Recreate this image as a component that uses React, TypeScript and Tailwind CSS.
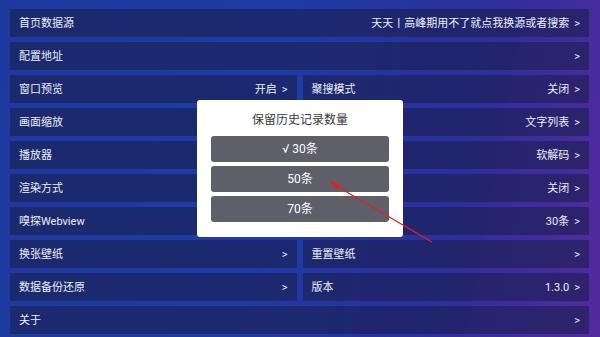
import React from 'react';

interface Cell {
  label: string;
  value?: string;
  noArrow?: boolean;
}

type Row = Cell[];

// cells under the dialog keep only what shows around it
const rows: Row[] = [
  [{ label: '首页数据源', value: '天天丨高峰期用不了就点我换源或者搜索' }],
  [{ label: '配置地址', value: '' }],
  [{ label: '窗口预览', value: '开启' }, { label: '聚搜模式', value: '关闭' }],
  [{ label: '画面缩放', noArrow: true }, { label: '', value: '文字列表' }],
  [{ label: '播放器', noArrow: true }, { label: '', value: '软解码' }],
  [{ label: '渲染方式', noArrow: true }, { label: '', value: '关闭' }],
  [{ label: '嗅探Webview', noArrow: true }, { label: '', value: '30条' }],
  [{ label: '换张壁纸', value: '' }, { label: '重置壁纸', value: '' }],
  [{ label: '数据备份还原', value: '' }, { label: '版本', value: '1.3.0' }],
  [{ label: '关于', value: '' }],
];

const options = ['√ 30条', '50条', '70条'];

function SettingCell({ cell }: { cell: Cell }) {
  return (
    <div className="flex-1 h-[28px] flex items-center justify-between pt-[3px] pl-[9px] pr-[9px] bg-[rgba(26,30,76,0.6)]">
      <span>{cell.label}</span>
      {!cell.noArrow && (
        <span className="flex items-center gap-[5px]">
          {cell.value && <span>{cell.value}</span>}
          <span>&gt;</span>
        </span>
      )}
    </div>
  );
}

export default function App() {
  return (
    <div
      className="relative w-[600px] h-[337px] overflow-hidden text-[11px] text-[#eceef6] bg-[linear-gradient(100deg,#1c3a9e_0%,#1d3ca6_45%,#2d2f9c_75%,#552a9e_100%)]"
      style={{ fontFamily: 'Roboto, "Noto Sans CJK SC", sans-serif' }}
    >
      <div className="flex flex-col gap-[5px] pt-[9px] pl-[10px] pr-[11px]">
        {rows.map((row, i) => (
          <div key={i} className="flex gap-[6px]">
            {row.map((cell, j) => (
              <SettingCell key={j} cell={cell} />
            ))}
          </div>
        ))}
      </div>

      {/* dialog */}
      <div className="absolute left-[197px] top-[100px] w-[206px] h-[137px] bg-white rounded-[3px] flex flex-col items-center px-[14px]">
        <div className="h-[36px] pt-[3px] flex items-center text-[12px] text-[#3a3a3a]">保留历史记录数量</div>
        <div className="w-full flex flex-col gap-[4px]">
          {options.map((o) => (
            <div
              key={o}
              className="h-[26px] w-full rounded-[3px] bg-[#5e5f68] flex items-center justify-center text-[12px] text-white"
            >
              {o}
            </div>
          ))}
        </div>
      </div>

      {/* annotation arrow */}
      <svg className="absolute left-0 top-0 pointer-events-none" width="600" height="337" viewBox="0 0 600 337">
        <line x1="432" y1="242" x2="333" y2="184" stroke="#e3201f" strokeWidth="1.3" />
        <polygon points="329,181.5 340,184 336.5,189.5" fill="#e3201f" />
      </svg>
    </div>
  );
}
